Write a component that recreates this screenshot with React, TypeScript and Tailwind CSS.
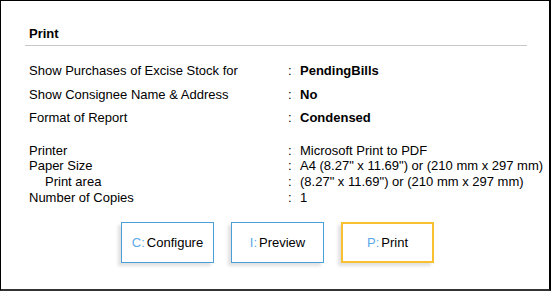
import React from "react";

const rows1 = [
  ["Show Purchases of Excise Stock for", "PendingBills"],
  ["Show Consignee Name & Address", "No"],
  ["Format of Report", "Condensed"],
];

const rows2: [string, string, boolean][] = [
  ["Printer", "Microsoft Print to PDF", false],
  ["Paper Size", 'A4 (8.27" x 11.69") or (210 mm x 297 mm)', false],
  ["Print area", '(8.27" x 11.69") or (210 mm x 297 mm)', true],
  ["Number of Copies", "1", false],
];

function Btn({ k, label, active }: { k: string; label: string; active?: boolean }) {
  return (
    <div
      className={
        "w-[93px] h-[41px] shrink-0 flex items-center justify-center bg-white shadow-[-3px_3px_3px_rgba(0,0,0,0.12)] " +
        (active ? "border-2 border-[#f8c131]" : "border border-[#4b9fd9]")
      }
    >
      <span className="text-[#5aa9e8]">{k}:</span>
      <span className="text-black ml-[2px]">{label}</span>
    </div>
  );
}

export default function App() {
  return (
    <div
      className="w-[551px] h-[291px] bg-white border-l border-t border-r-2 border-b-2 border-l-black border-t-black border-r-black border-b-[#333] text-[13px] text-black"
      style={{ fontFamily: '"Liberation Sans", Arial, sans-serif' }}
    >
      <div className="pl-[24px] pr-[22px] pt-[25px]">
        <div className="font-bold pl-[4px] pb-[4px] border-b border-[#c8c8c8] leading-[15px]">Print</div>
        <div className="pl-[4px] pt-[17px]">
          {rows1.map(([a, b]) => (
            <div key={a} className="flex h-[23.5px] items-start leading-[15px] whitespace-nowrap">
              <div className="w-[259px] shrink-0">{a}</div>
              <div className="w-[12px] shrink-0">:</div>
              <div className="font-bold">{b}</div>
            </div>
          ))}
          <div className="pt-[9px]">
            {rows2.map(([a, b, ind]) => (
              <div key={a} className="flex h-[15.7px] items-start leading-[15px] whitespace-nowrap">
                <div className={"w-[259px] shrink-0 " + (ind ? "pl-[16px]" : "")}>{a}</div>
                <div className="w-[12px] shrink-0">:</div>
                <div>{b}</div>
              </div>
            ))}
          </div>
        </div>
        <div className="flex gap-[17px] pl-[96px] pt-[17px]">
          <Btn k="C" label="Configure" />
          <Btn k="I" label="Preview" />
          <Btn k="P" label="Print" active />
        </div>
      </div>
    </div>
  );
}
